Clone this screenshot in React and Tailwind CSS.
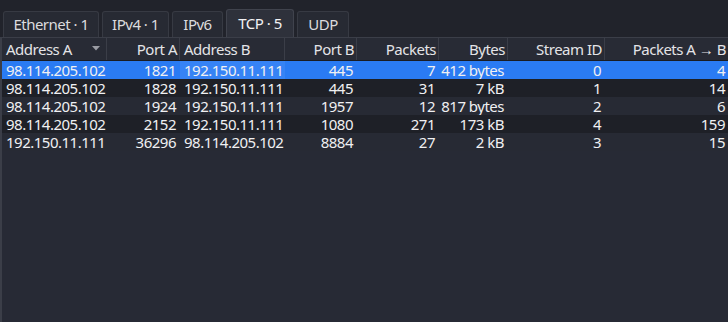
import React from "react";

const cols = [
  { name: "Address A", w: "w-[105px]", align: "left", sort: true },
  { name: "Port A", w: "w-[73px]", align: "right" },
  { name: "Address B", w: "w-[105px]", align: "left" },
  { name: "Port B", w: "w-[72px]", align: "right" },
  { name: "Packets", w: "w-[82px]", align: "right" },
  { name: "Bytes", w: "w-[69px]", align: "right" },
  { name: "Stream ID", w: "w-[97px]", align: "right" },
  { name: "Packets A → B", w: "flex-1", align: "right" },
];

const rows = [
  ["98.114.205.102", "1821", "192.150.11.111", "445", "7", "412 bytes", "0", "4"],
  ["98.114.205.102", "1828", "192.150.11.111", "445", "31", "7 kB", "1", "14"],
  ["98.114.205.102", "1924", "192.150.11.111", "1957", "12", "817 bytes", "2", "6"],
  ["98.114.205.102", "2152", "192.150.11.111", "1080", "271", "173 kB", "4", "159"],
  ["192.150.11.111", "36296", "98.114.205.102", "8884", "27", "2 kB", "3", "15"],
];

const tabs = [
  { label: "Ethernet · 1", w: "w-[96px]" },
  { label: "IPv4 · 1", w: "w-[67px]" },
  { label: "IPv6", w: "w-[51px]" },
  { label: "TCP · 5", w: "w-[68px]", active: true },
  { label: "UDP", w: "w-[52px]" },
];

const rowBg = ["bg-[#2a7bf3]", "bg-[#1e2027]", "bg-[#272a34]", "bg-[#1e2027]", "bg-[#272a34]"];

export default function App() {
  return (
    <div
      className="w-[728px] h-[322px] bg-[#21232b] text-[#e8e8ea] overflow-hidden flex flex-col"
      style={{ fontFamily: '"Noto Sans", "Open Sans", sans-serif' }}
    >
      <div className="h-[37px] flex items-end gap-[3px] pl-[3px] shrink-0">
        {tabs.map((t) =>
          t.active ? (
            <div
              key={t.label}
              className={`${t.w} h-[28px] bg-[#2e313b] border border-b-0 border-[#40434d] rounded-t-[3px] flex items-center justify-center text-[15px] tracking-[-0.5px] text-[#f2f2f4]`}
            >
              {t.label}
            </div>
          ) : (
            <div
              key={t.label}
              className={`${t.w} h-[26px] bg-[#272a33] border border-b-0 border-[#373a43] rounded-t-[3px] flex items-center justify-center text-[15px] tracking-[-0.5px] text-[#dcdcdf]`}
            >
              {t.label}
            </div>
          )
        )}
      </div>
      <div className="flex-1 flex flex-col border-l-2 border-t border-[#3b3e48] bg-[#272a35]">
        <div className="h-[23px] flex bg-[#282b35] border-b border-[#1a1c22] text-[15px] tracking-[-0.5px] leading-none text-[#e4e4e7]">
          {cols.map((c, i) => (
            <div
              key={c.name}
              className={`${c.w} relative flex items-center ${
                c.align === "right" ? "justify-end pr-[2px]" : "pl-[4px]"
              } ${i < cols.length - 1 ? "border-r border-[#3b3e48]" : ""}`}
            >
              <span>{c.name}</span>
              {c.sort && (
                <svg
                  className="absolute right-[6px] top-[8px]"
                  width="8"
                  height="5"
                  viewBox="0 0 8 5"
                >
                  <path d="M0 0 L8 0 L4 4.5 Z" fill="#9a9ca3" />
                </svg>
              )}
            </div>
          ))}
        </div>
        {rows.map((r, ri) => (
          <div key={ri} className={`h-[18px] flex ${rowBg[ri]} text-[15px] tracking-[-0.5px] leading-[18px] text-[#f0f0f2]`}>
            {r.map((v, ci) => {
              const c = cols[ci];
              const focus = ri === 0 && ci === 2 ? "bg-[#3683f5]" : "";
              return (
                <div
                  key={ci}
                  className={`${c.w} ${focus} ${
                    c.align === "right" ? "text-right pr-[3px]" : "pl-[4px]"
                  } ${ci < cols.length - 1 ? "border-r border-transparent" : ""} whitespace-nowrap`}
                >
                  {v}
                </div>
              );
            })}
          </div>
        ))}
      </div>
    </div>
  );
}
